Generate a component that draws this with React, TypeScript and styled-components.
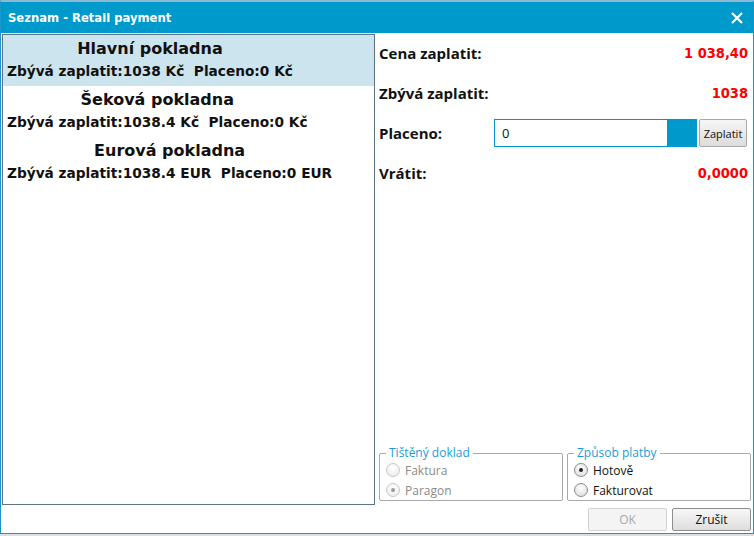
import React from "react";
import styled, { createGlobalStyle } from "styled-components";

const GlobalStyle = createGlobalStyle`
  html, body {
    margin: 0;
    padding: 0;
    background: #d9dee2;
  }
  * {
    box-sizing: border-box;
  }
`;

interface Register {
  name: string;
  remaining: string;
  paid: string;
  selected?: boolean;
}

const registers: Register[] = [
  { name: "Hlavní pokladna", remaining: "1038 Kč", paid: "0 Kč", selected: true },
  { name: "Šeková pokladna", remaining: "1038.4 Kč", paid: "0 Kč" },
  { name: "Eurová pokladna", remaining: "1038.4 EUR", paid: "0 EUR" },
];

const Window = styled.div`
  width: 754px;
  height: 534px;
  display: flex;
  flex-direction: column;
  background: #ffffff;
  border-top: 2px solid #8fb8d2;
  border-left: 1px solid #1a96c8;
  border-right: 1px solid #1a96c8;
  border-bottom: 1px solid #1a96c8;
`;

const TitleBar = styled.div`
  height: 31px;
  flex: none;
  background: #0099cc;
  display: flex;
  align-items: center;
  justify-content: space-between;
  padding: 0 10px 0 7px;
  color: #ffffff;
  font-family: "DejaVu Sans", sans-serif;
  font-weight: bold;
  font-size: 11.6px;
`;

const CloseIcon = styled.svg`
  width: 12px;
  height: 12px;
`;

const Body = styled.div`
  flex: 1;
  display: flex;
  min-height: 0;
`;

const ListPanel = styled.div`
  width: 373px;
  height: 471px;
  margin: 1px 0 0 1px;
  border: 1px solid #5b7585;
  display: flex;
  flex-direction: column;
`;

const ListItem = styled.div<{ $selected?: boolean }>`
  height: 51px;
  padding: 3px 0 0 4px;
  background: ${(p) => (p.$selected ? "#cce4ee" : "transparent")};
  font-family: "DejaVu Sans", sans-serif;
  font-weight: bold;
  color: #111111;
`;

const ItemInner = styled.div`
  display: inline-flex;
  flex-direction: column;
  align-items: center;
`;

const ItemName = styled.div`
  font-size: 16px;
  line-height: 22px;
`;

const ItemDetail = styled.div`
  font-size: 13.7px;
  line-height: 22px;
  white-space: pre;
`;

const RightPanel = styled.div`
  flex: 1;
  display: flex;
  flex-direction: column;
  padding: 0 2px 2px 4px;
`;

const Row = styled.div`
  height: 40px;
  display: flex;
  align-items: center;
  padding-right: 3px;
  font-family: "Open Sans", sans-serif;
`;

const Label = styled.div`
  width: 115px;
  font-weight: bold;
  font-size: 15px;
  color: #111111;
  white-space: nowrap;
`;

const Value = styled.div`
  margin-left: auto;
  color: #ff0000;
  font-family: "DejaVu Sans Condensed", "DejaVu Sans", sans-serif;
  font-weight: bold;
  font-size: 14.5px;
`;

const Input = styled.div`
  width: 174px;
  height: 28px;
  border: 1px solid #0099cc;
  background: #ffffff;
  display: flex;
  align-items: center;
  padding-left: 7px;
  font-size: 13px;
  color: #111111;
`;

const InputCap = styled.div`
  width: 29px;
  height: 28px;
  background: #0099cc;
`;

const SmallButton = styled.button`
  margin-left: 2px;
  width: 48px;
  height: 28px;
  padding: 0;
  border: 1px solid #a8a8a8;
  border-radius: 2px;
  background: linear-gradient(#f6f6f6, #dcdcdc);
  font-family: "Open Sans", sans-serif;
  font-size: 11px;
  color: #111111;
`;

const Spacer = styled.div`
  flex: 1;
`;

const Groups = styled.div`
  display: flex;
  gap: 4px;
`;

const Group = styled.fieldset`
  flex: 1;
  margin: 0;
  height: 55px;
  padding: 0 0 0 6px;
  border: 1px solid #a9a9a9;
  border-radius: 2px;
  font-family: "Open Sans", sans-serif;
  font-size: 12px;
`;

const Legend = styled.legend`
  padding: 0 3px;
  margin-left: 0;
  color: #1f9bd6;
  font-size: 12px;
  line-height: 14px;
`;

const RadioRow = styled.div<{ $disabled?: boolean }>`
  height: 20px;
  display: flex;
  align-items: center;
  gap: 5px;
  color: ${(p) => (p.$disabled ? "#8a8a8a" : "#111111")};
`;

const RadioDot = styled.span<{ $checked?: boolean; $disabled?: boolean }>`
  width: 14px;
  height: 14px;
  border-radius: 50%;
  border: 1px solid ${(p) => (p.$disabled ? "#c8c8c8" : "#8c8c8c")};
  background: ${(p) =>
    p.$disabled
      ? "radial-gradient(circle at 50% 35%, #ffffff, #eaeaea)"
      : "radial-gradient(circle at 50% 35%, #ffffff, #d8d8d8)"};
  display: flex;
  align-items: center;
  justify-content: center;
  &::after {
    content: "";
    width: 4px;
    height: 4px;
    border-radius: 50%;
    background: ${(p) => (p.$disabled ? "#9a9a9a" : "#222222")};
    display: ${(p) => (p.$checked ? "block" : "none")};
  }
`;

const Footer = styled.div`
  display: flex;
  justify-content: flex-end;
  gap: 5px;
  padding-top: 7px;
`;

const DialogButton = styled.button<{ $disabled?: boolean }>`
  width: 79px;
  height: 23px;
  padding: 0;
  border: 1px solid ${(p) => (p.$disabled ? "#d2d2d2" : "#8e8e8e")};
  border-radius: 2px;
  background: ${(p) =>
    p.$disabled ? "#f4f4f4" : "linear-gradient(#f7f7f7, #dedede)"};
  color: ${(p) => (p.$disabled ? "#a8a8a8" : "#111111")};
  font-family: "Open Sans", sans-serif;
  font-size: 12px;
`;

const Radio: React.FC<{ label: string; checked?: boolean; disabled?: boolean }> = ({
  label,
  checked,
  disabled,
}) => (
  <RadioRow $disabled={disabled}>
    <RadioDot $checked={checked} $disabled={disabled} />
    {label}
  </RadioRow>
);

export default function App() {
  return (
    <>
      <GlobalStyle />
      <Window>
        <TitleBar>
          <span>Seznam - Retail payment</span>
          <CloseIcon viewBox="0 0 12 12">
            <path d="M1 1 L11 11 M11 1 L1 11" stroke="#ffffff" strokeWidth="2.2" />
          </CloseIcon>
        </TitleBar>
        <Body>
          <ListPanel>
            {registers.map((r) => (
              <ListItem key={r.name} $selected={r.selected}>
                <ItemInner>
                  <ItemName>{r.name}</ItemName>
                  <ItemDetail>
                    {`Zbývá zaplatit:${r.remaining}  Placeno:${r.paid}`}
                  </ItemDetail>
                </ItemInner>
              </ListItem>
            ))}
          </ListPanel>
          <RightPanel>
            <Row>
              <Label>Cena zaplatit:</Label>
              <Value>1 038,40</Value>
            </Row>
            <Row>
              <Label>Zbývá zaplatit:</Label>
              <Value>1038</Value>
            </Row>
            <Row>
              <Label>Placeno:</Label>
              <Input>0</Input>
              <InputCap />
              <SmallButton>Zaplatit</SmallButton>
            </Row>
            <Row>
              <Label>Vrátit:</Label>
              <Value>0,0000</Value>
            </Row>
            <Spacer />
            <Groups>
              <Group>
                <Legend>Tištěný doklad</Legend>
                <Radio label="Faktura" disabled />
                <Radio label="Paragon" checked disabled />
              </Group>
              <Group>
                <Legend>Způsob platby</Legend>
                <Radio label="Hotově" checked />
                <Radio label="Fakturovat" />
              </Group>
            </Groups>
            <Footer>
              <DialogButton $disabled>OK</DialogButton>
              <DialogButton>Zrušit</DialogButton>
            </Footer>
          </RightPanel>
        </Body>
      </Window>
    </>
  );
}
